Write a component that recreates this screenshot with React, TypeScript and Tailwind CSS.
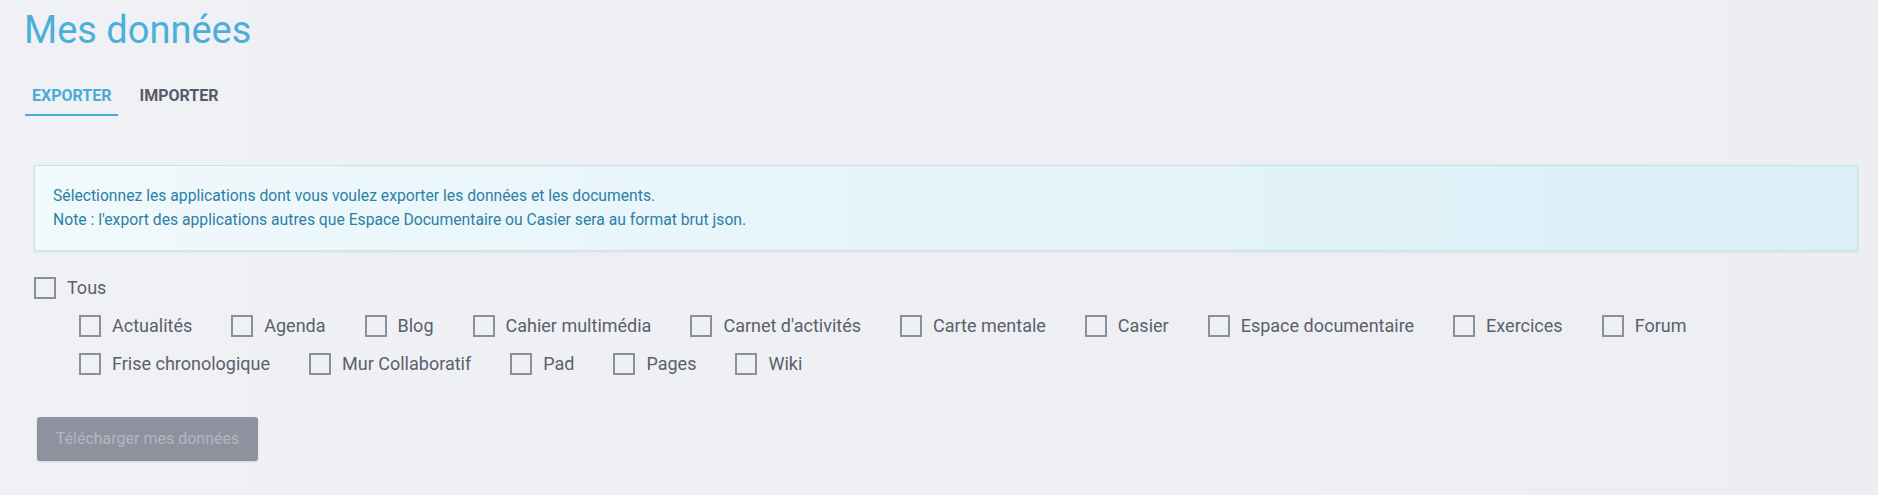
import React, { useState } from "react";

const ROW_ONE = [
  "Actualités",
  "Agenda",
  "Blog",
  "Cahier multimédia",
  "Carnet d'activités",
  "Carte mentale",
  "Casier",
  "Espace documentaire",
  "Exercices",
  "Forum",
];

const ROW_TWO = ["Frise chronologique", "Mur Collaboratif", "Pad", "Pages", "Wiki"];

function Checkbox({ label, checked, onToggle }: { label: string; checked: boolean; onToggle: () => void }) {
  return (
    <label className="flex items-center cursor-pointer select-none">
      <span
        onClick={onToggle}
        className={`w-[22px] h-[22px] border-2 border-[#8b909c] flex items-center justify-center ${checked ? "bg-[#4aaed9] border-[#4aaed9]" : "bg-transparent"}`}
      >
        {checked && (
          <svg viewBox="0 0 16 16" className="w-3.5 h-3.5 text-white" fill="none" stroke="currentColor" strokeWidth="2.5">
            <path d="M3 8.5l3.2 3L13 4.5" />
          </svg>
        )}
      </span>
      <span className="ml-[11px] text-[18px] leading-[22px] text-[#5b5f6e]">{label}</span>
    </label>
  );
}

export default function App() {
  const [tab, setTab] = useState<"export" | "import">("export");
  const [selected, setSelected] = useState<string[]>([]);

  const all = [...ROW_ONE, ...ROW_TWO];
  const allChecked = selected.length === all.length;

  const toggle = (name: string) =>
    setSelected((prev) => (prev.includes(name) ? prev.filter((n) => n !== name) : [...prev, name]));

  return (
    <div
      className="min-h-[495px] w-full bg-gradient-to-r from-[#f0f1f4] to-[#edeef2] pl-[24px] pr-[10px] pt-[8px] pb-8"
      style={{ fontFamily: "Roboto, 'Liberation Sans', sans-serif" }}
    >
      {/* Page title */}
      <h1 className="text-[38px] leading-[45px] text-[#4bafda] font-normal">Mes données</h1>

      {/* Tabs */}
      <div className="flex gap-[14px] mt-[25px] ml-px">
        <button
          onClick={() => setTab("export")}
          className={`px-[7px] pt-[6px] pb-[6px] border-b-2 text-[16px] leading-[24px] font-bold ${tab === "export" ? "text-[#47acd7] border-[#47acd7]" : "text-[#565a6b] border-transparent"}`}
        >
          EXPORTER
        </button>
        <button
          onClick={() => setTab("import")}
          className={`px-[7px] pt-[6px] pb-[6px] border-b-2 text-[16px] leading-[24px] font-bold ${tab === "import" ? "text-[#47acd7] border-[#47acd7]" : "text-[#565a6b] border-transparent"}`}
        >
          IMPORTER
        </button>
      </div>

      <div className="px-[10px]">
        {/* Info notice */}
        <div className="mt-[49px] border border-[#c4e3ee] bg-gradient-to-r from-[#f0f9fc] to-[#dbeff7] p-[18px] text-[15.7px] leading-[24px] text-[#2b80a6] shadow-[0_1px_3px_rgba(0,0,0,0.08)]">
          <p>Sélectionnez les applications dont vous voulez exporter les données et les documents.</p>
          <p>Note : l'export des applications autres que Espace Documentaire ou Casier sera au format brut json.</p>
        </div>

        {/* Application list */}
        <div className="mt-[26px]">
          <Checkbox
            label="Tous"
            checked={allChecked}
            onToggle={() => setSelected(allChecked ? [] : all)}
          />
        </div>
        <div className="pl-[45px]">
          <div className="flex gap-x-[39px] mt-4">
            {ROW_ONE.map((name) => (
              <Checkbox key={name} label={name} checked={selected.includes(name)} onToggle={() => toggle(name)} />
            ))}
          </div>
          <div className="flex gap-x-[39px] mt-4">
            {ROW_TWO.map((name) => (
              <Checkbox key={name} label={name} checked={selected.includes(name)} onToggle={() => toggle(name)} />
            ))}
          </div>
        </div>

        {/* Download button */}
        <button
          disabled={selected.length === 0}
          className="mt-[42px] ml-[3px] w-[221px] h-[44px] rounded-[3px] bg-[#8d929e] text-[#b2b6c0] text-[16px] shadow-[0_1px_2px_rgba(0,0,0,0.12)]"
        >
          Télécharger mes données
        </button>
      </div>
    </div>
  );
}
